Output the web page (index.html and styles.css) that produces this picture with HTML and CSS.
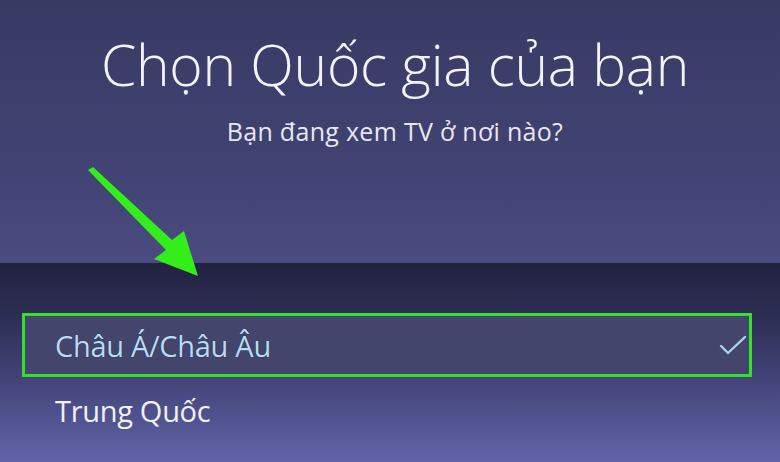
FILE: index.html
```html
<!DOCTYPE html>
<html lang="vi">
<head>
<meta charset="utf-8">
<link rel="stylesheet" href="styles.css">
</head>
<body>
<div class="screen">
  <header class="top">
    <h1 class="title">Chọn Quốc gia của bạn</h1>
    <p class="subtitle">Bạn đang xem TV ở nơi nào?</p>
  </header>
  <section class="list">
    <div class="item selected">
      <span class="label">Châu Á/Châu Âu</span>
      <svg class="check" width="28" height="22" viewBox="0 0 28 22"><path d="M2 12 L9 19 L26 3" fill="none" stroke="#a9d2f2" stroke-width="2.4" stroke-linecap="round" stroke-linejoin="round"/></svg>
    </div>
    <div class="item"><span class="label">Trung Quốc</span></div>
    <div class="item"><span class="label">Hàn Quốc</span></div>
  </section>
  <svg class="arrow" width="220" height="300" viewBox="0 0 220 300">
    <path d="M88 170 L93 167 L172 240 L184 231 L198 276 L154 259 L166 250 Z" fill="#33ee1a"/>
  </svg>
</div>
</body>
</html>
```

FILE: styles.css
```css
html, body {
  margin: 0;
  padding: 0;
  background: #2a2b4a;
}
.screen {
  position: relative;
  width: 780px;
  height: 462px;
  overflow: hidden;
  font-family: "Open Sans", "Noto Sans", sans-serif;
}
.top {
  height: 263px;
  box-sizing: border-box;
  padding: 31px 0 0 10px;
  text-align: center;
  background: linear-gradient(180deg, #393a64 0%, #3f4170 55%, #4a4b80 100%);
  color: #f2f2f7;
}
.title {
  margin: 0;
  font-weight: 300;
  font-size: 57px;
  line-height: 66px;
  letter-spacing: -0.3px;
}
.subtitle {
  margin: 18px 0 0;
  font-weight: 400;
  font-size: 25px;
  line-height: 32px;
  letter-spacing: 0.3px;
  color: #e8e8f0;
}
.list {
  height: 199px;
  box-sizing: border-box;
  padding: 50px 28px 0 22px;
  background: linear-gradient(180deg, #222340 0%, #2c2d52 25%, #43457a 60%, #6264a8 100%);
}
.item {
  height: 66px;
  display: flex;
  align-items: center;
  box-sizing: border-box;
  padding: 0 30px 0 33px;
  color: #f0f0f5;
  font-size: 29px;
  letter-spacing: -0.3px;
}
.item.selected {
  height: 64px;
  border: 3px solid #33e02a;
  background: #44456c;
  color: #b9dcf6;
  justify-content: space-between;
  padding-left: 30px;
  padding-right: 2px;
}
.selected .label {
  text-shadow: 0 0 1px #1c2340;
}
.check {
  display: block;
}
.arrow {
  position: absolute;
  left: 0;
  top: 0;
}
```
